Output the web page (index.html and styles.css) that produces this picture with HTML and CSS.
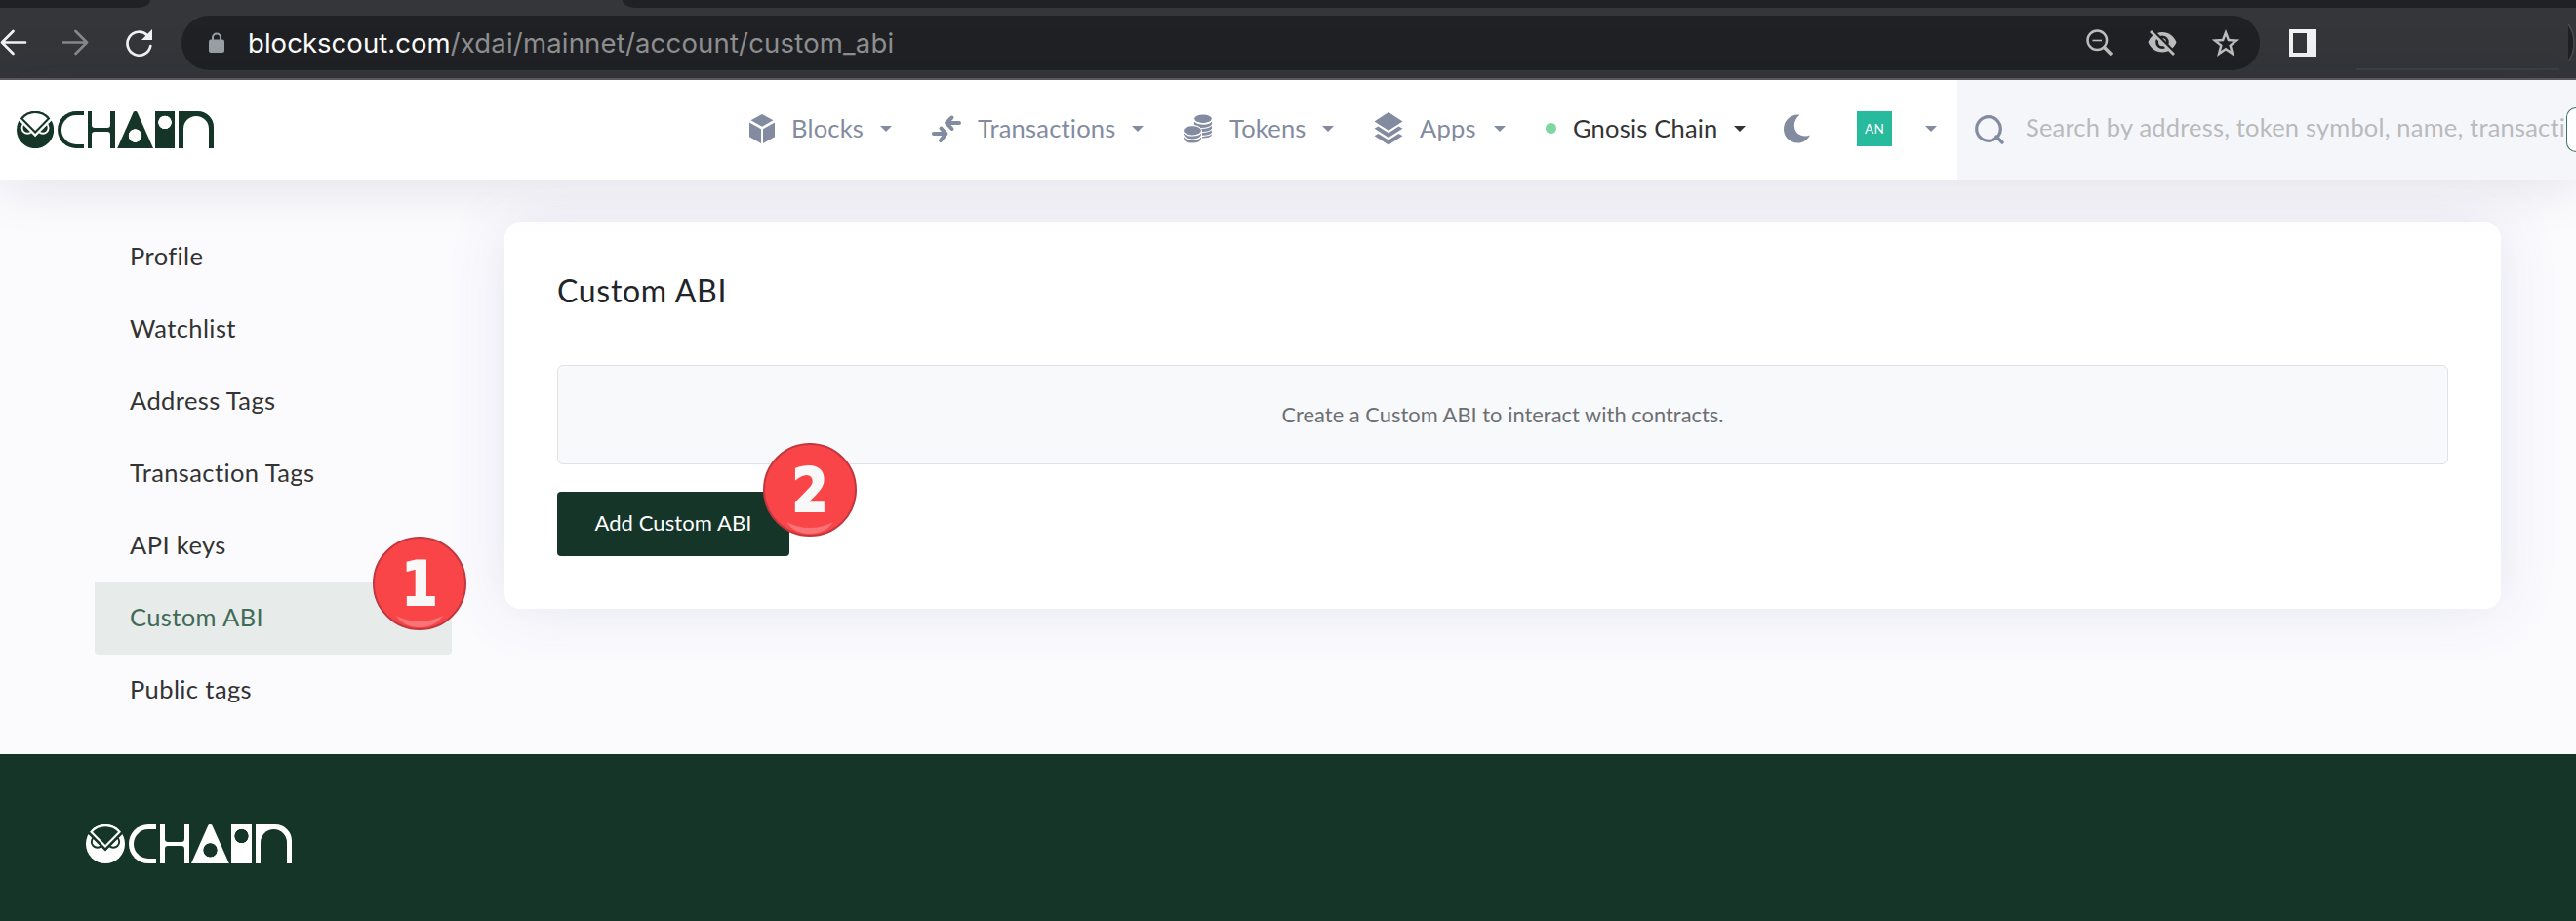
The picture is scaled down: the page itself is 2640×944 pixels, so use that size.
FILE: index.html
```html
<!DOCTYPE html>
<html lang="en">
<head>
<meta charset="utf-8">
<title>Custom ABI</title>
<link rel="stylesheet" href="styles.css">
</head>
<body>
<div class="browser">
  <div class="tabstrip"><span class="tab-left"></span><span class="tab-right"></span></div>
  <div class="toolbar">
    <svg class="tool back" width="28" height="28" viewBox="0 0 28 28"><path d="M13.5 2 2 13.5 13.5 25M2 13.5H26"/></svg>
    <svg class="tool forward" width="28" height="28" viewBox="0 0 28 28"><path d="M13.5 2 25 13.5 13.5 25M25 13.5H1"/></svg>
    <svg class="tool reload" width="28" height="28" viewBox="0 0 28 28"><path d="M25.3 17A12 12 0 1 1 22 6.2"/><path class="solid" d="M27 0V11H16Z"/></svg>
    <div class="omnibox">
      <svg class="lock" width="16" height="22" viewBox="0 0 16 22"><path d="M4 9V5.500a4 4 0 0 1 8 0V9" fill="none" stroke="#9aa0a6" stroke-width="2"/><rect y="7.500" width="16" height="13.500" rx="2" fill="#9aa0a6"/></svg>
      <span class="url"><span class="host">blockscout.com</span>/xdai/mainnet/account/custom_abi</span>
      <span class="omni-icons">
        <svg width="28" height="28" viewBox="0 0 28 28"><g fill="none" stroke="#bebebe"><circle cx="11.300" cy="11.300" r="9.800" stroke-width="2.500"/><path d="M6.500 11.500H16" stroke-width="1.600"/><path d="M18.500 18.500 26 26" stroke-width="3.600"/></g></svg>
        <svg width="30" height="28" viewBox="0 0 30 28"><path fill="#bebebe" fill-rule="evenodd" d="M0.500 13.200C3 7 8.500 3 15 3S27 7 29.500 13.200C27 19.500 21.500 23.500 15 23.500S3 19.500 .5 13.200ZM15 6.500a6.800 6.800 0 1 0 0 13.600a6.800 6.800 0 1 0 0-13.600Z"/><circle cx="15" cy="13.300" r="4" fill="#bebebe"/><path d="M4.500 .5 29 25" stroke="#202124" stroke-width="3"/><path d="M3 2 27 26" stroke="#bebebe" stroke-width="2.800"/></svg>
        <svg width="30" height="28" viewBox="0 0 30 28"><path fill="none" stroke="#bebebe" stroke-width="2.500" d="M15 3.500 17.900 11 26 11.500 19.700 16.600 21.900 25 15 20.300 8.100 25 10.300 16.600 4 11.500 12.100 11Z"/></svg>
      </span>
    </div>
    <svg class="panel" width="28" height="28" viewBox="0 0 28 28"><path fill="#f1f3f4" fill-rule="evenodd" d="M0 0H28V28H0ZM4 4V24H18V4Z"/></svg>
    <span class="toolbar-line"></span>
    <svg class="edge" width="8" height="44" viewBox="0 0 8 44"><path d="M0 3Q6 11 6 22T0 41Z" fill="#202124"/><path d="M0 3Q6 11 6 22T0 41" fill="none" stroke="#4b4c50" stroke-width="1.500"/></svg>
  </div>
</div>

<header class="header">
  <div class="logo header-logo" role="img" aria-label="OwlChain">
    <svg class="owl" viewBox="0 0 40 40"><circle class="fg" cx="20" cy="20" r="20"/><g class="bg-stroke" fill="none"><circle cx="11.800" cy="17.800" r="6" stroke-width="1.900"/><circle cx="28.200" cy="17.800" r="6" stroke-width="1.900"/><path d="M3.500 7.500 20 24 36.500 7.500" stroke-width="5"/></g><path class="mask" d="M5.500 7.800A19 19 0 0 1 34.500 7.800L20 22.500Z" stroke-width="2.200"/></svg>
    <i class="lc"></i><i class="lh"></i><i class="la"></i><i class="li"></i><i class="ln"></i>
  </div>
  <nav class="nav">
    <a class="nav-item w-blocks"><svg width="26" height="30" viewBox="0 0 26 30"><path d="M13 0 24.500 6.300 13 12.800 1.500 6.300ZM0 8.500 12 15.200V30L0 23.300ZM26 8.500 14 15.200V30L26 23.300Z"/></svg><span>Blocks</span><b class="caret"></b></a>
    <a class="nav-item w-tx"><svg width="30" height="30" viewBox="0 0 30 30"><path class="stroked" d="M2 20H13M9.500 14.500 14.500 20 9 27M28 9H17M20.500 3.500 15 9 20.500 15"/></svg><span>Transactions</span><b class="caret"></b></a>
    <a class="nav-item w-tokens"><svg width="30" height="30" viewBox="0 0 30 30"><path d="M11 8V6Q12 10 20 10.500T29 6V21Q28 24.500 19 24.500V17Q18 12 11 11Z"/><ellipse cx="20" cy="4.800" rx="9" ry="4.300"/><path d="M0 17V25Q1 29.500 9 29.500T18 25V17Z"/><path class="gap" d="M10.500 5Q12 9.800 20 9.800T29.500 5M18 14.500Q27 14.500 29.500 10.500M19 18.500Q27 18.500 29.500 15M19 22.300Q27 22.500 29.500 19M0 17.500Q1 22 9 22T18.500 17.500M0 21.500Q1 26 9 26T18.500 21.500"/><ellipse cx="9" cy="16.800" rx="9.600" ry="5.400" fill="#fff"/><ellipse cx="9" cy="16.800" rx="9" ry="4.600"/></svg><span>Tokens</span><b class="caret"></b></a>
    <a class="nav-item w-apps"><svg width="30" height="34" viewBox="0 0 30 34"><path d="M15 0 29.500 9.500 15 18.800.500 9.500ZM.5 16.800 4.500 14.500 15 21.300 25.500 14.500 29.500 16.800 15 26ZM.5 24.300 4.500 22 15 28.600 25.500 22 29.500 24.300 15 33.500Z"/></svg><span>Apps</span><b class="caret"></b></a>
    <a class="nav-item w-chain"><i class="dot"></i><span>Gnosis Chain</span><b class="caret"></b></a>
    <svg class="moon" width="28" height="30" viewBox="0 0 28 30"><path d="M16.500.5C10 6 9 14 14 19.500C18 23 23 23 27 21.500C24 27 19.500 29.500 14.500 29.500C6 29.500 0 23 0 15.500C0 7 6.500-.5 16.500.500Z"/></svg>
    <span class="avatar">AN</span>
    <b class="caret"></b>
  </nav>
  <div class="search">
    <svg width="30" height="30" viewBox="0 0 30 30"><circle cx="14" cy="14" r="12.300" fill="none" stroke="#828ba0" stroke-width="3.200"/><path d="M22 22 28 28" stroke="#828ba0" stroke-width="3.400" stroke-linecap="round"/></svg>
    <span class="placeholder">Search by address, token symbol, name, transacti</span>
    <span class="hotkey"></span>
  </div>
</header>

<main class="main">
  <aside class="sidebar">
    <a>Profile</a><a>Watchlist</a><a>Address Tags</a><a>Transaction Tags</a><a>API keys</a>
    <a class="active">Custom ABI<span class="badge badge-one"><em>1</em><svg width="48" height="12" viewBox="0 0 48 12"><path d="M0 0Q24 12 48 0Q40 12 24 12T0 0Z"/></svg></span></a>
    <a>Public tags</a>
  </aside>
  <section class="card">
    <h1>Custom ABI</h1>
    <div class="empty">Create a Custom ABI to interact with contracts.</div>
    <a class="button">Add Custom ABI<span class="badge badge-two"><em>2</em><svg width="48" height="12" viewBox="0 0 48 12"><path d="M0 0Q24 12 48 0Q40 12 24 12T0 0Z"/></svg></span></a>
  </section>
</main>

<footer class="footer">
  <div class="logo footer-logo" role="img" aria-label="OwlChain">
    <svg class="owl" viewBox="0 0 40 40"><circle class="fg" cx="20" cy="20" r="20"/><g class="bg-stroke" fill="none"><circle cx="11.800" cy="17.800" r="6" stroke-width="1.900"/><circle cx="28.200" cy="17.800" r="6" stroke-width="1.900"/><path d="M3.500 7.500 20 24 36.500 7.500" stroke-width="5"/></g><path class="mask" d="M5.500 7.800A19 19 0 0 1 34.500 7.800L20 22.500Z" stroke-width="2.200"/></svg>
    <i class="lc"></i><i class="lh"></i><i class="la"></i><i class="li"></i><i class="ln"></i>
  </div>
</footer>
</body>
</html>
```
FILE: styles.css
```css
* { box-sizing: border-box; }
body {
  margin: 0;
  width: 2640px;
  height: 944px;
  overflow: hidden;
  display: flex;
  flex-direction: column;
  background: #fbfbfe;
  font-family: Lato, "Open Sans", sans-serif;
}
svg { display: block; flex: none; }

/* Browser chrome */
.browser { height: 82px; flex: none; background: #35363a; border-bottom: 2px solid #5f5b60; }
.tabstrip { height: 8px; display: flex; justify-content: space-between; }
.tab-left { width: 154px; background: #202124; border-bottom-right-radius: 14px 8px; }
.tab-right { width: 2002px; background: #202124; border-bottom-left-radius: 14px 8px; }
.toolbar { height: 72px; display: flex; align-items: center; }
.tool { fill: none; stroke: #f1f3f4; stroke-width: 2.7; stroke-linecap: round; stroke-linejoin: round; }
.tool .solid { fill: #f1f3f4; stroke: none; }
.forward { stroke: #87888b; margin-left: 36px; }
.reload { margin: 0 29px 0 37px; }
.omnibox {
  width: 2130px;
  height: 56px;
  border-radius: 28px;
  padding: 0 20px 0 28px;
  display: flex;
  align-items: center;
  background: #202124;
}
.url { margin-left: 24px; font: 27.5px/56px Inter, sans-serif; color: #8f9092; letter-spacing: .18px; }
.host { color: #fff; letter-spacing: .05px; }
.omni-icons { margin-left: auto; display: flex; gap: 35px; }
.panel { margin-left: 30px; }
.toolbar-line { width: 208px; height: 2px; margin: 54px 9px 0 41px; background: #3f4044; }
.edge { flex: none; }

/* Site header */
.header {
  position: relative;
  z-index: 2;
  height: 103px;
  flex: none;
  display: flex;
  background: #fff;
  box-shadow: 0 0 60px rgba(20, 24, 50, .13);
}
.nav {
  margin-left: auto;
  display: grid;
  grid-template-columns: 187px 258px 195px 176px 244px 75px 70px 33px;
  align-items: center;
  padding-bottom: 4px;
  color: #828ba0;
  fill: #828ba0;
  font-size: 25.5px;
  letter-spacing: .2px;
}
.nav-item { display: flex; align-items: center; white-space: nowrap; }
.nav-item span { margin: 0 0 1px 17px; }
.nav .caret { margin-left: auto; }
.nav > .caret { margin-left: 0; }
.w-blocks { width: 146px; }
.w-tx { width: 217px; }
.w-tokens { width: 154px; }
.w-apps { width: 135px; }
.w-chain { width: 205px; color: #333; }
.stroked { fill: none; stroke: #828ba0; stroke-width: 4; stroke-linecap: round; stroke-linejoin: round; }
.gap { fill: none; stroke: #fff; stroke-width: 1.2; }
.caret {
  width: 0;
  border: 6.5px solid transparent;
  border-top-color: currentColor;
  border-bottom: 0;
}
.dot { width: 11px; height: 11px; border-radius: 50%; background: #80d6a1; }
.avatar {
  width: 36px;
  height: 36px;
  display: grid;
  place-items: center;
  background: #28ba9c;
  color: #fff;
  font-size: 13.5px;
}
.search { width: 634px; display: flex; align-items: center; padding: 0 0 2px 18px; background: #f5f6fa; }
.placeholder {
  width: 554px;
  margin: 0 0 5px 22px;
  font-size: 25.5px;
  letter-spacing: .18px;
  color: #b9babc;
  white-space: nowrap;
}
.hotkey {
  width: 10px;
  height: 46px;
  margin-left: 1px;
  border: 1.5px solid #3f7460;
  border-right: 0;
  border-radius: 12px 0 0 12px;
  background: #fff;
}

/* Brand mark built from basic shapes, sized in em */
.logo { --fg: #153529; --bg: #fff; height: 1em; display: flex; }
.header-logo { font-size: 38.2px; margin: 32px 0 0 17px; }
.footer-logo { --fg: #fff; --bg: #153529; font-size: 40px; }
.owl { width: 1em; height: 1em; margin-right: .1em; }
.fg { fill: var(--fg); }
.bg-stroke { stroke: var(--bg); }
.mask { fill: var(--bg); stroke: var(--fg); }
.logo i { height: 1em; flex: none; }
.lc { width: .7em; margin-right: .1em; border: .128em solid var(--fg); border-right: 0; border-radius: .5em 0 0 .5em; }
.lh {
  width: .75em;
  margin-right: .05em;
  display: flex;
  flex-direction: column;
  justify-content: space-between;
  background: var(--fg);
}
.lh::before, .lh::after {
  content: "";
  height: .44em;
  margin: 0 .128em;
  background: var(--bg);
  border-radius: 0 0 .08em .08em;
}
.lh::after { border-radius: .08em .08em 0 0; }
.la {
  width: .97em;
  margin-right: .055em;
  background: radial-gradient(circle at 50% 66%, var(--bg) .17em, var(--fg) .185em);
  clip-path: polygon(45% 2%, 48% 0, 52% 0, 55% 2%, 100% 100%, 0 100%);
}
.li { width: .53em; margin-right: .1em; background: radial-gradient(circle at 50% 30%, var(--bg) .17em, var(--fg) .185em); }
.ln { width: .925em; padding: .128em .128em 0; background: var(--fg); border-top-right-radius: .42em; }
.ln::before { content: ""; display: block; height: 100%; background: var(--bg); border-radius: .34em .34em 0 0; }

/* Account page */
.main { height: 588px; flex: none; display: flex; align-items: flex-start; padding: 42px 77px 0 97px; }
.sidebar { width: 366px; }
.sidebar a {
  position: relative;
  display: block;
  height: 74px;
  padding-left: 36px;
  font-size: 25.5px;
  line-height: 70px;
  letter-spacing: .4px;
  color: #333;
}
.sidebar .active { z-index: 3; background: #e7ecea; color: #3f6b57; border-radius: 0 0 4px 4px; }
.card {
  flex: 1;
  height: 396px;
  margin: 1px 0 0 54px;
  padding: 50px 54px 0;
  border-radius: 16px;
  background: #fff;
  box-shadow: 0 0 60px rgba(80, 70, 150, .13);
}
.card h1 { margin: 0 0 56px; font-size: 32px; line-height: 40px; font-weight: 400; letter-spacing: .7px; color: #212529; }
.empty {
  height: 102px;
  border: 1px solid #dee2e6;
  border-radius: 6px;
  background: #f8f9fb;
  font-size: 21.8px;
  line-height: 99px;
  letter-spacing: .05px;
  text-align: center;
  color: #6c6f74;
}
.button {
  position: relative;
  display: block;
  width: 238px;
  height: 66px;
  margin-top: 28px;
  border-radius: 4px;
  background: #153529;
  color: #fff;
  font-size: 22px;
  line-height: 63px;
  letter-spacing: .1px;
  text-align: center;
}
.badge {
  position: absolute;
  width: 96px;
  height: 96px;
  border: 2px solid #c2373f;
  border-radius: 50%;
  background: #fa4548;
  color: #f8f8f8;
  letter-spacing: 0;
  text-align: center;
}
.badge em { display: block; font: bold 62px/94px "DejaVu Sans", sans-serif; transform: scaleX(.86); -webkit-text-stroke: 2px #f8f8f8; }
.badge svg { position: absolute; left: 22px; top: 79px; fill: #fa7376; }
.badge-one { left: 285px; top: -47px; }
.badge-two { left: 211px; top: -50px; }

.footer { flex: 1; padding: 72px 88px; background: #153529; }
```
